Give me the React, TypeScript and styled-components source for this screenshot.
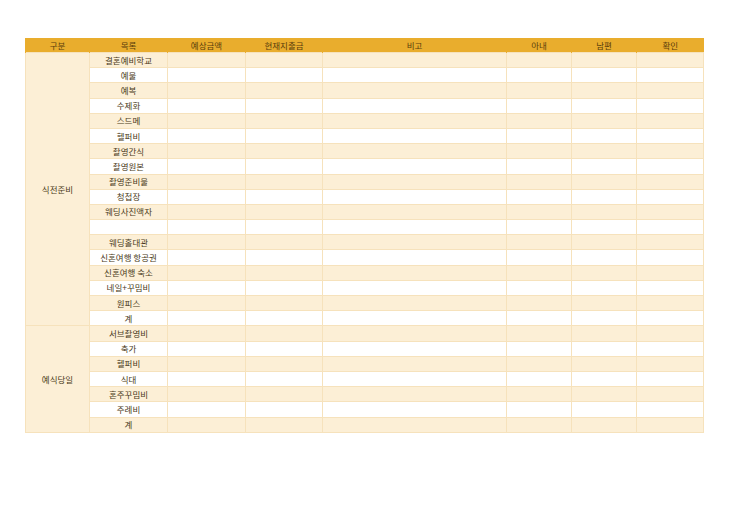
import React from "react";
import styled, { createGlobalStyle } from "styled-components";

const Global = createGlobalStyle`
  html, body { margin: 0; padding: 0; background: #fff; }
  body { font-family: "Noto Sans CJK KR", "Noto Sans", sans-serif; }
`;

const Page = styled.div`
  padding: 38px 40px 0 25px;
`;

const Table = styled.table`
  width: 678px;
  border-collapse: collapse;
  table-layout: fixed;
  font-size: 8.5px;
  color: #4a3a20;
`;

const Th = styled.th`
  background: #e9ad2d;
  color: #5a3d0c;
  font-weight: 400;
  height: 14px;
  padding: 0;
  line-height: 14px;
  border-left: 1px solid #e9ad2d;
`;

const Td = styled.td<{ $shade: boolean }>`
  background: ${(p) => (p.$shade ? "#fcefd6" : "#ffffff")};
  border: 1px solid #f6e2bc;
  height: 14.2px;
  padding: 0;
  line-height: 13px;
  text-align: center;
  white-space: nowrap;
`;

const Group = styled.td`
  background: #fcefd6;
  border: 1px solid #f6e2bc;
  padding: 0;
  text-align: center;
`;

const widths = [64, 78, 78, 77, 184, 65, 65, 67];
const headers = ["구분", "목록", "예상금액", "현재지출금", "비고", "아내", "남편", "확인"];

const groups: { name: string; items: string[] }[] = [
  {
    name: "식전준비",
    items: ["결혼예비학교", "예물", "예복", "수제화", "스드메", "헬퍼비", "촬영간식", "촬영원본", "촬영준비물", "청첩장", "웨딩사진액자", "", "웨딩홀대관", "신혼여행 항공권", "신혼여행 숙소", "네일+꾸밈비", "원피스", "계"],
  },
  { name: "예식당일", items: ["서브촬영비", "축가", "헬퍼비", "식대", "혼주꾸밈비", "주례비", "계"] },
];

export default function App() {
  let idx = 0;
  return (
    <Page>
      <Global />
      <Table>
        <colgroup>
          {widths.map((w, i) => (
            <col key={i} style={{ width: w }} />
          ))}
        </colgroup>
        <thead>
          <tr>
            {headers.map((h) => (
              <Th key={h}>{h}</Th>
            ))}
          </tr>
        </thead>
        <tbody>
          {groups.map((g) =>
            g.items.map((it, i) => {
              const shade = idx++ % 2 === 0;
              return (
                <tr key={g.name + i}>
                  {i === 0 && <Group rowSpan={g.items.length}>{g.name}</Group>}
                  <Td $shade={shade}>{it}</Td>
                  {[0, 1, 2, 3, 4, 5].map((c) => (
                    <Td key={c} $shade={shade} />
                  ))}
                </tr>
              );
            })
          )}
        </tbody>
      </Table>
    </Page>
  );
}
